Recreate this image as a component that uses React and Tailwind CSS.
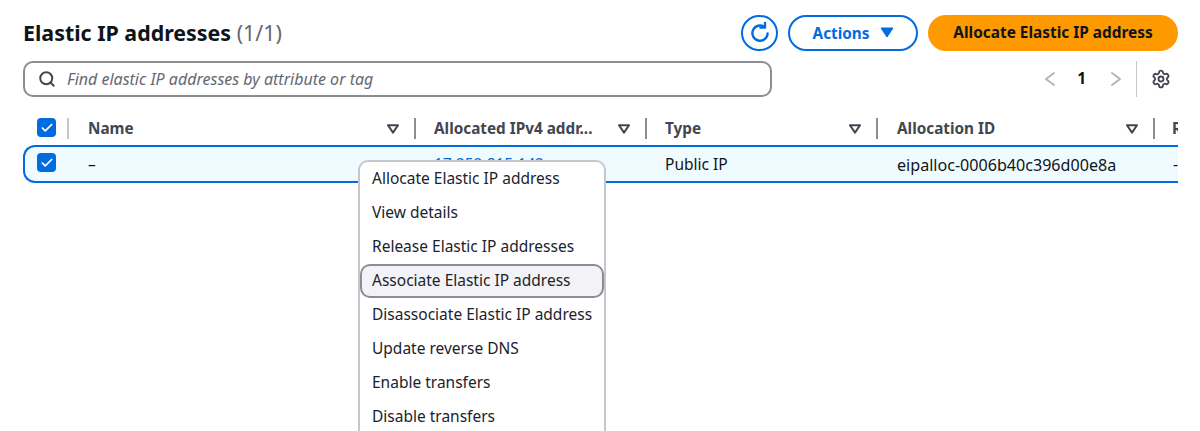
import React from "react";
import { Search, Settings, Check } from "lucide-react";

const font = "font-['Noto_Sans','Open_Sans',sans-serif]";

function Box() {
  return (
    <span className="flex h-[19px] w-[19px] items-center justify-center rounded-[4px] bg-[#006ce0]">
      <Check size={14} strokeWidth={3} className="text-white" />
    </span>
  );
}

function SortCaret() {
  return (
    <svg width="14" height="12" viewBox="0 0 14 12" className="text-[#424650]">
      <path d="M2 2.2 H12 L7 9.6 Z" fill="none" stroke="currentColor" strokeWidth="2" strokeLinejoin="round" />
    </svg>
  );
}

function HeadCell({ w, label, first }) {
  return (
    <div className={`flex h-[21px] shrink-0 items-center ${w} ${first ? "pl-[19px]" : "pl-[18px]"} pr-[14px]`}>
      <span className="truncate text-[15.3px] font-bold text-[#424650]">{label}</span>
      <span className="ml-auto flex items-center pl-2"><SortCaret /></span>
    </div>
  );
}

function Divider({ light }) {
  return <span className={`h-[21px] w-[2px] shrink-0 ${light ? "bg-[#c6c6cd]" : "bg-[#8c8c94]"}`} />;
}

function Chevron({ left }) {
  return (
    <svg width="12" height="16" viewBox="0 0 12 16" fill="none" stroke="#b4b4bb" strokeWidth="2" strokeLinecap="round" strokeLinejoin="round">
      <path d={left ? "M10 2 L2 8 L10 14" : "M2 2 L10 8 L2 14"} />
    </svg>
  );
}

const items = [
  "Allocate Elastic IP address",
  "View details",
  "Release Elastic IP addresses",
  "Associate Elastic IP address",
  "Disassociate Elastic IP address",
  "Update reverse DNS",
  "Enable transfers",
  "Disable transfers",
];

export default function App() {
  return (
    <div className={`relative h-[431px] w-[1200px] overflow-hidden bg-white text-[#0f141a] ${font}`}>
      <div className="flex flex-col pl-[23px] pr-[22px] pt-[14px]">
        <div className="flex h-[37px] items-center">
          <h1 className="text-[21.4px] font-bold leading-[37px]">
            Elastic IP addresses <span className="font-normal text-[#656871]">(1/1)</span>
          </h1>
          <div className="ml-auto flex items-center gap-[10px]">
            <button className="flex h-[36px] w-[37px] items-center justify-center rounded-full border-2 border-[#006ce0] text-[#006ce0]">
              <svg width="24" height="24" viewBox="0 0 24 24" fill="none" stroke="currentColor" strokeWidth="2.4" strokeLinecap="round" strokeLinejoin="round">
                <path d="M19.6 12.5a7.6 7.6 0 1 1-3.2-6.6" />
                <path d="M17 2v4.6h-4.6" />
              </svg>
            </button>
            <button className="flex h-[36px] w-[130px] items-center justify-center gap-[11px] rounded-full border-2 border-[#006ce0] pl-[1px] text-[15.3px] font-bold text-[#006ce0]">
              <span className="pt-[2px]">Actions</span>
              <svg width="14" height="11" viewBox="0 0 14 11"><path d="M1 1 H13 L7 10 Z" fill="currentColor" stroke="currentColor" strokeLinejoin="round" /></svg>
            </button>
            <button className="flex h-[36px] w-[250px] items-center justify-center rounded-full bg-[#ff9900] text-[15.4px] font-bold text-[#0f141a]">
              Allocate Elastic IP address
            </button>
          </div>
        </div>

        <div className="mt-[10px] flex h-[36px] items-center">
          <div className="flex h-[36px] w-[749px] items-center gap-[11px] rounded-[10px] border-2 border-[#8c8c94] pl-[13px]">
            <Search size={18} strokeWidth={2.6} className="text-[#424650]" />
            <span className="text-[16px] italic text-[#656871]">Find elastic IP addresses by attribute or tag</span>
          </div>
          <div className="ml-auto flex items-center pr-[7px]">
            <Chevron left />
            <span className="ml-[21px] mr-[24px] text-[15.5px] font-bold">1</span>
            <Chevron />
            <span className="ml-[14px] h-[36px] w-[1px] bg-[#c6c6cd]" />
            <Settings size={20} strokeWidth={2.2} className="ml-[14px] text-[#424650]" />
          </div>
        </div>

        <div className="mt-[21px] w-[1155px] overflow-hidden">
          <div className="flex h-[21px] items-center">
            <div className="flex w-[44px] shrink-0 items-center pb-[2px] pl-[14px]"><Box /></div>
            <Divider light />
            <HeadCell first w="w-[345px]" label="Name" />
            <Divider />
            <HeadCell w="w-[229px]" label="Allocated IPv4 addr..." />
            <Divider />
            <HeadCell w="w-[229px]" label="Type" />
            <Divider />
            <HeadCell first w="w-[275px]" label="Allocation ID" />
            <Divider />
            <span className="ml-[17px] truncate text-[15.3px] font-bold text-[#424650]">R</span>
          </div>
          <div className="mt-[6px] flex h-[38px] w-[1200px] items-center rounded-l-[12px] border-2 border-r-0 border-[#006ce0] bg-[#f0fbff] text-[15.5px]">
            <div className="flex w-[43px] shrink-0 items-center pb-[3px] pl-[12px]"><Box /></div>
            <div className="w-[347px] shrink-0 pl-[20px] pt-[2px]">–</div>
            <div className="w-[231px] shrink-0 pl-[19px] pt-[2px] text-[#006ce0] underline">17.252.815.142</div>
            <div className="w-[231px] shrink-0 pl-[19px] pt-[2px]">Public IP</div>
            <div className="w-[277px] shrink-0 whitespace-nowrap pl-[20px] pt-[2px] text-[16.1px]">eipalloc-0006b40c396d00e8a</div>
            <div className="pl-[19px] pt-[2px]">-</div>
          </div>
        </div>
      </div>

      <ul className="absolute left-[358px] top-[160px] flex h-[300px] w-[248px] flex-col rounded-[10px] border-2 border-[#c6c6cd] bg-white text-[15.5px] text-[#1b232d]">
        {items.map((t) => (
          <li
            key={t}
            className={`flex h-[34px] shrink-0 items-center whitespace-nowrap rounded-[10px] ${
              t === "Associate Elastic IP address" ? "border-2 border-[#8c8c94] bg-[#f3f3f7] pl-[10px]" : "pl-[12px]"
            }`}
          >
            {t}
          </li>
        ))}
      </ul>
    </div>
  );
}
